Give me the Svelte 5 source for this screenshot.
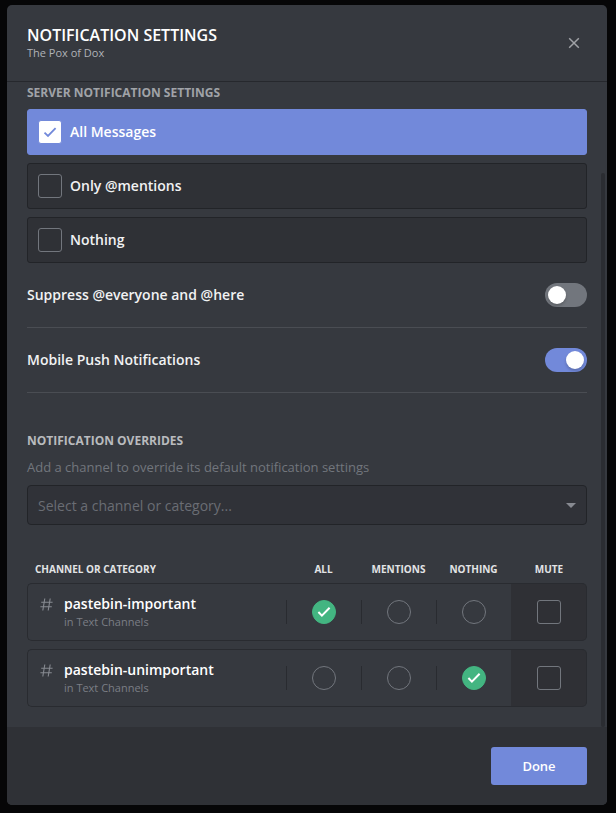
<script>
  const levels = [
    { id: 'all', label: 'All Messages' },
    { id: 'mentions', label: 'Only @mentions' },
    { id: 'nothing', label: 'Nothing' }
  ];
  const columns = [
    { id: 'all', label: 'All' },
    { id: 'mentions', label: 'Mentions' },
    { id: 'nothing', label: 'Nothing' }
  ];

  let level = $state('all');
  let suppress = $state(false);
  let push = $state(true);
  let channel = $state('');
  let overrides = $state([
    { name: 'pastebin-important', parent: 'in Text Channels', level: 'all', mute: false },
    { name: 'pastebin-unimportant', parent: 'in Text Channels', level: 'nothing', mute: false }
  ]);
</script>

<main class="backdrop">
  <section class="modal" aria-labelledby="title">
    <header class="header">
      <div>
        <h1 class="title" id="title">NOTIFICATION SETTINGS</h1>
        <p class="server">The Pox of Dox</p>
      </div>
      <button class="close" type="button" aria-label="Close">
        <svg width="12" height="12" viewBox="0 0 12 12" aria-hidden="true">
          <path d="M1.2 1.2 10.8 10.8M10.8 1.2 1.2 10.8" fill="none" stroke="currentColor" stroke-width="1.5" />
        </svg>
      </button>
    </header>

    <div class="body">
      <div class="content">
        <h2 class="caption dim" id="levels">SERVER NOTIFICATION SETTINGS</h2>
        <div class="levels" role="radiogroup" aria-labelledby="levels">
          {#each levels as item}
            <label class="level" class:selected={level === item.id}>
              <span class="tick">
                <input class="box" type="radio" name="level" value={item.id} bind:group={level} />
                {#if level === item.id}
                  <svg class="mark" width="18" height="18" viewBox="0 0 18 18" aria-hidden="true">
                    <path d="M3.5 9.6 7 13 14.6 5.2" fill="none" stroke="#7289da" stroke-width="1.8" />
                  </svg>
                {/if}
              </span>
              <span>{item.label}</span>
            </label>
          {/each}
        </div>

        <label class="setting">
          <span>Suppress @everyone and @here</span>
          <input class="switch" type="checkbox" role="switch" bind:checked={suppress} />
        </label>
        <label class="setting">
          <span>Mobile Push Notifications</span>
          <input class="switch" type="checkbox" role="switch" bind:checked={push} />
        </label>

        <h2 class="caption overrides-caption">NOTIFICATION OVERRIDES</h2>
        <label class="hint" for="channel">Add a channel to override its default notification settings</label>
        <div class="picker">
          <select id="channel" bind:value={channel}>
            <option value="">Select a channel or category...</option>
          </select>
          <svg class="arrow" width="10" height="5" viewBox="0 0 10 5" aria-hidden="true">
            <path d="M0 0H10L5 5Z" fill="#878a91" />
          </svg>
        </div>

        <table class="overrides">
          <thead>
            <tr>
              <th class="name-head" scope="col">CHANNEL OR CATEGORY</th>
              {#each columns as column}
                <th class="choice-head" scope="col">{column.label.toUpperCase()}</th>
              {/each}
              <th class="mute-head" scope="col">MUTE</th>
            </tr>
          </thead>
          <tbody>
            {#each overrides as row}
              <tr>
                <td class="name-cell">
                  <div class="channel">
                    <svg class="hash" width="13" height="13" viewBox="0 0 13 13" aria-hidden="true">
                      <path d="M4.8 .5 2.8 12.5M10.2 .5 8.2 12.5M1.2 4.2H12.6M.4 8.8H11.8" fill="none" stroke="#878a91" stroke-width="1.1" />
                    </svg>
                    <div>
                      <div class="channel-name">{row.name}</div>
                      <div class="channel-parent">{row.parent}</div>
                    </div>
                  </div>
                </td>
                {#each columns as column}
                  <td>
                    <div class="choice">
                      <span class="tick">
                        <input
                          class="dot"
                          type="radio"
                          name={row.name}
                          value={column.id}
                          aria-label={`${row.name}: ${column.label}`}
                          bind:group={row.level}
                        />
                        {#if row.level === column.id}
                          <svg class="mark" width="14" height="12" viewBox="0 0 14 12" aria-hidden="true">
                            <path d="M1.4 6 4.9 9.6 12.6 1.8" fill="none" stroke="#fff" stroke-width="2" />
                          </svg>
                        {/if}
                      </span>
                    </div>
                  </td>
                {/each}
                <td class="mute-cell">
                  <span class="tick">
                    <input class="box" type="checkbox" aria-label={`Mute ${row.name}`} bind:checked={row.mute} />
                  </span>
                </td>
              </tr>
            {/each}
          </tbody>
        </table>
      </div>
      <div class="scrollbar"></div>
    </div>

    <footer class="footer">
      <button class="done" type="button">Done</button>
    </footer>
  </section>
</main>

<style>
  :global(body) {
    background: #060607;
  }

  .backdrop,
  .backdrop * {
    box-sizing: border-box;
  }

  .backdrop {
    padding: 5px 9px 8px 7px;
    font-family: 'Open Sans', 'Noto Sans', sans-serif;
    color: #f1f2f3;
  }

  h1,
  h2,
  p,
  input {
    margin: 0;
  }

  button,
  select {
    font-family: inherit;
    border: 0;
  }

  .modal {
    background: #36393f;
    border-radius: 5px;
    overflow: hidden;
  }

  .header {
    display: flex;
    align-items: center;
    justify-content: space-between;
    height: 77px;
    padding: 0 20px;
    border-bottom: 1px solid #26282d;
  }

  .title {
    font-size: 16px;
    line-height: 20px;
    font-weight: 600;
    color: #fff;
  }

  .server {
    font-size: 11px;
    line-height: 16px;
    color: #b0b3b8;
  }

  .close {
    display: grid;
    place-items: center;
    width: 26px;
    height: 26px;
    padding: 0;
    background: none;
    color: #a0a2a6;
  }

  .body {
    display: flex;
    padding-right: 2px;
  }

  .content {
    flex: 1;
    min-width: 0;
    padding: 3px 14px 12px 20px;
  }

  .scrollbar {
    width: 4px;
    margin-top: 91px;
    border-radius: 2px;
    background: #2b2d32;
  }

  .caption {
    font-size: 12px;
    line-height: 16px;
    font-weight: 700;
    color: #b9bbbe;
  }

  .dim {
    color: #a0a3a8;
  }

  .levels {
    display: flex;
    flex-direction: column;
    gap: 8px;
    margin-top: 8px;
  }

  .level {
    display: flex;
    align-items: center;
    gap: 8px;
    height: 46px;
    padding: 0 10px;
    border: 1px solid #222428;
    border-radius: 3px;
    background: #2f3136;
    font-size: 14px;
    line-height: 20px;
    font-weight: 600;
  }

  .selected {
    border-color: #7289da;
    background: #7289da;
    color: #fff;
  }

  .tick {
    display: inline-grid;
    place-items: center;
    vertical-align: middle;
  }

  .tick > :global(*) {
    grid-area: 1 / 1;
  }

  .mark {
    pointer-events: none;
  }

  .box,
  .dot {
    appearance: none;
    width: 24px;
    height: 24px;
    border: 1px solid #72767d;
    border-radius: 3px;
  }

  .selected .box {
    border-color: #7289da;
    background: #fff;
  }

  .dot {
    border-radius: 12px;
  }

  .dot:checked {
    border-color: #43b581;
    background: #43b581;
  }

  .setting {
    display: flex;
    align-items: center;
    justify-content: space-between;
    height: 65px;
    border-bottom: 1px solid #4a4d53;
    font-size: 14px;
    line-height: 20px;
    font-weight: 600;
  }

  .switch {
    appearance: none;
    display: flex;
    width: 42px;
    height: 24px;
    padding: 3px;
    border-radius: 12px;
    background: #72767d;
  }

  .switch::before {
    content: '';
    width: 18px;
    height: 18px;
    border-radius: 9px;
    background: #fff;
    box-shadow: 0 2px 3px rgba(0, 0, 0, 0.2);
  }

  .switch:checked {
    justify-content: flex-end;
    background: #7289da;
  }

  .overrides-caption {
    margin-top: 40px;
  }

  .hint {
    display: block;
    margin: 8px 0;
    font-size: 13px;
    line-height: 20px;
    color: #72767d;
  }

  .picker {
    display: grid;
    align-items: center;
    justify-items: end;
  }

  .picker > * {
    grid-area: 1 / 1;
  }

  select {
    appearance: none;
    width: 100%;
    height: 40px;
    padding: 0 10px;
    border: 1px solid #222428;
    border-radius: 4px;
    background: #303238;
    font-size: 14px;
    color: #6a6d74;
  }

  .arrow {
    margin-right: 11px;
    pointer-events: none;
  }

  .overrides {
    width: 100%;
    margin-top: 30px;
    table-layout: fixed;
    border-collapse: separate;
    border-spacing: 0 8px;
  }

  th {
    padding: 0;
    font-size: 10px;
    line-height: 12px;
    font-weight: 700;
    color: #e2e3e5;
  }

  .name-head {
    padding-left: 8px;
    text-align: left;
  }

  .choice-head {
    width: 75px;
  }

  .mute-head {
    width: 76px;
  }

  td {
    height: 58px;
    padding: 0;
    border: 1px solid #292b30;
    border-width: 1px 0;
  }

  .name-cell {
    padding-left: 12px;
    border-left-width: 1px;
    border-radius: 5px 0 0 5px;
  }

  .mute-cell {
    border-right-width: 1px;
    border-radius: 0 5px 5px 0;
    background: #2f3035;
    text-align: center;
  }

  .channel {
    display: flex;
    gap: 11px;
  }

  .hash {
    margin-top: 4px;
  }

  .channel-name {
    font-size: 14px;
    line-height: 20px;
    font-weight: 600;
    color: #fff;
  }

  .channel-parent {
    font-size: 11px;
    line-height: 16px;
    color: #7b7e85;
  }

  .choice {
    display: grid;
    place-items: center;
    height: 24px;
    border-left: 1px solid #292b30;
  }

  .footer {
    display: flex;
    justify-content: flex-end;
    padding: 20px;
    background: #2f3136;
  }

  .done {
    width: 96px;
    height: 38px;
    border-radius: 3px;
    background: #7289da;
    color: #fff;
    font-size: 13px;
    font-weight: 600;
  }
</style>
